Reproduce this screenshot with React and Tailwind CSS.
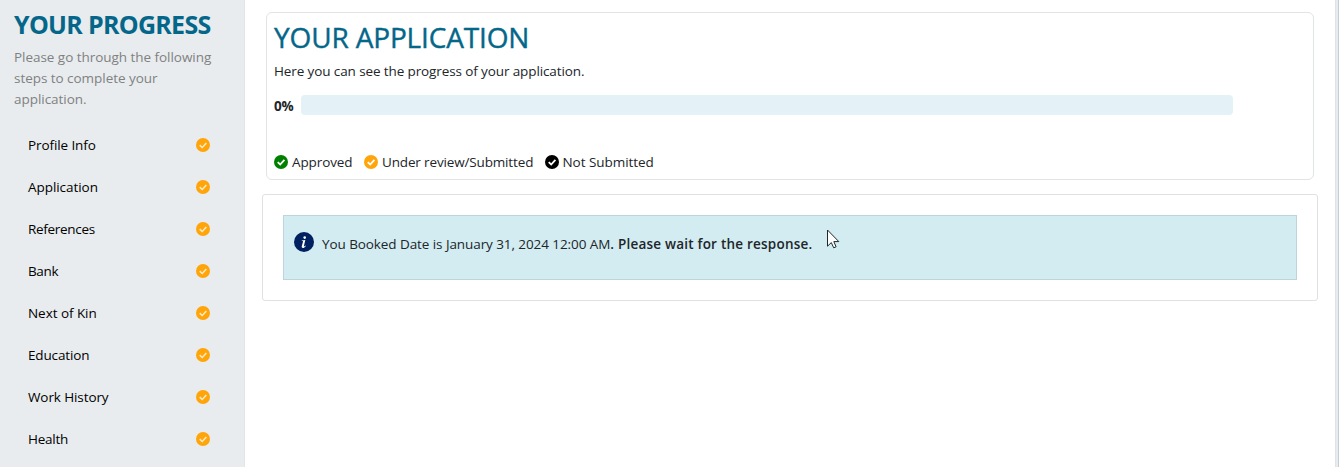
const steps = [
  { label: "Profile Info", spacing: "tracking-[-0.1px]" },
  { label: "Application", spacing: "tracking-[-0.05px]" },
  { label: "References", spacing: "tracking-[-0.3px]" },
  { label: "Bank", spacing: "tracking-[-0.35px]" },
  { label: "Next of Kin", spacing: "tracking-[-0.05px]" },
  { label: "Education", spacing: "tracking-[-0.15px]" },
  { label: "Work History", spacing: "tracking-[-0.1px]" },
  { label: "Health", spacing: "tracking-[-0.25px]" },
];

function CheckCircle({ className, mark = "white", weight = 1.8 }) {
  return (
    <svg className={className} viewBox="0 0 14 14">
      <circle cx="7" cy="7" r="7" fill="currentColor" />
      <path d="M3.7 7.1 6.2 9.5 10.4 4.9" fill="none" stroke={mark} strokeWidth={weight} />
    </svg>
  );
}

function Sidebar() {
  return (
    <aside className="w-[245px] shrink-0 overflow-hidden border-r border-[#e2e5e8] bg-[#e8ecee] pl-3.5">
      <h2 className="mt-[7px] h-[35px] whitespace-nowrap text-[25px] leading-[34px] font-bold tracking-[-0.7px] text-[#04678a]">
        YOUR PROGRESS
      </h2>
      <p className="mt-[5px] whitespace-nowrap text-[13.5px] leading-[21px] tracking-[-0.04px] text-[#808182]">
        Please go through the following
        <br />
        steps to complete your
        <br />
        application.
      </p>
      <ul className="mt-[14px] w-[196px] pl-3.5">
        {steps.map((s) => (
          <li key={s.label} className="flex h-[42px] items-center justify-between text-[13.5px] text-black">
            <span className={s.spacing}>{s.label}</span>
            <CheckCircle className="size-3.5 text-[#ffa50a]" mark="#fdebc8" weight={1.5} />
          </li>
        ))}
      </ul>
    </aside>
  );
}

function Legend() {
  return (
    <div className="flex h-[21px] items-center whitespace-nowrap text-[13.5px] tracking-[-0.1px]">
      <div className="flex w-[90px] items-center gap-1">
        <CheckCircle className="mb-0.5 size-3.5 text-[#008000]" />
        Approved
      </div>
      <div className="flex w-[180.5px] items-center gap-1 tracking-[-0.15px]">
        <CheckCircle className="mb-0.5 size-3.5 text-[#ffa50a]" />
        Under review/Submitted
      </div>
      <div className="flex items-center gap-1 tracking-[-0.05px]">
        <CheckCircle className="mb-0.5 size-3.5 text-black" />
        Not Submitted
      </div>
    </div>
  );
}

function Cursor() {
  return (
    <svg className="absolute top-[13px] left-[543px]" width="13" height="20" viewBox="0 0 13 20">
      <path
        d="M.5 1v16.2l3.8-3.6 2.4 5.2 2.4-1-2.3-5.2h5z"
        fill="white"
        stroke="#20282c"
        strokeWidth="1"
      />
    </svg>
  );
}

export default function App() {
  return (
    <div className="flex h-[467px] w-[1339px] overflow-hidden bg-white font-['Open_Sans','Noto_Sans',sans-serif] text-[#212529]">
      <Sidebar />
      <main className="min-w-0 flex-1 pt-3 pl-[17px]">
        <section className="ml-1 h-[168px] w-[1048px] rounded-md border border-[#e2e3e4] pl-[7px]">
          <h1 className="mt-[6px] h-[39px] whitespace-nowrap text-[28px] leading-[36px] font-medium tracking-[-0.15px] text-[#04678a] [-webkit-text-stroke:0.4px_#04678a]">
            YOUR APPLICATION
          </h1>
          <p className="mt-[3px] whitespace-nowrap text-[13.5px] leading-[21px] tracking-[-0.11px]">
            Here you can see the progress of your application.
          </p>
          <div className="mt-[13px] flex h-5 items-center">
            <span className="w-[27px] pt-0.5 text-[13.5px] font-bold tracking-[-0.3px]">0%</span>
            <div className="h-5 w-[932px] rounded bg-[#e4f1f7]" />
          </div>
          <div className="mt-[37px]">
            <Legend />
          </div>
        </section>
        <section className="mt-3.5 h-[107px] w-[1056px] rounded-[3px] border border-[#e0e1e2] px-5 py-5">
          <div className="relative flex h-[65px] w-[1014px] items-start border border-[#bdd4da] bg-[#d2ecf1] pl-2.5">
            <svg className="mt-4 size-5 shrink-0" viewBox="0 0 20 20">
              <circle cx="10" cy="10" r="10" fill="#002060" />
              <circle cx="10.7" cy="5.6" r="1.3" fill="white" />
              <path
                d="M7.6 8.6 11.3 8l-1.4 6c-.2.8.3.8 1.4-.5l.5.4c-1.2 1.6-2.2 2.1-3.1 2-.9-.1-1.2-.8-.9-1.8l1.2-4.3c.1-.6-.2-.7-1.2-.7z"
                fill="white"
              />
            </svg>
            <p className="mt-[18px] ml-2 whitespace-nowrap text-[13.5px] leading-[21px]">
              <span className="tracking-[-0.08px]">You Booked Date is January 31, 2024 12:00 AM</span>
              <span className="font-semibold tracking-[0.22px]">. Please wait for the response.</span>
            </p>
            <Cursor />
          </div>
        </section>
      </main>
      <div className="w-1 shrink-0 border-r border-l border-r-[#c5ced2] border-l-[#dfe3e5] bg-[#e8ecee]" />
    </div>
  );
}
